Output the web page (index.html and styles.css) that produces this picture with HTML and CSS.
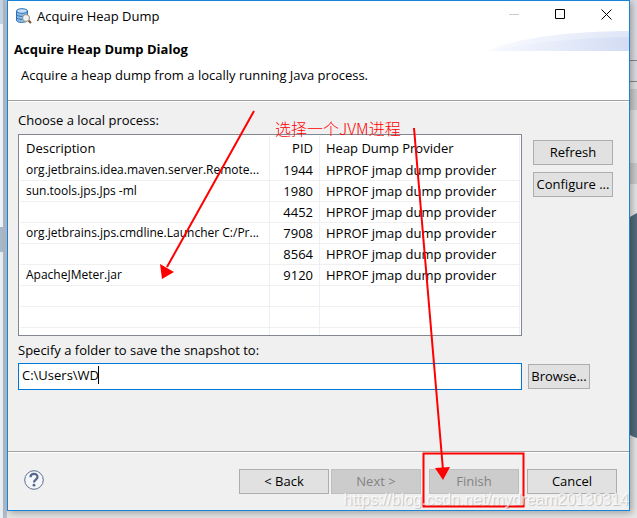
FILE: index.html
```html
<!DOCTYPE html>
<html lang="en">
<head>
    <meta charset="utf-8">
    <title>Acquire Heap Dump</title>
    <link rel="stylesheet" href="styles.css">
</head>
<body>
    <div class="edge edge-left"></div>
    <main class="dialog">
        <header class="titlebar">
            <svg class="app-icon" viewBox="0 0 16 16" width="16" height="16">
                <path d="M.5 3v9c0 1.500 2 2.500 5 2.500s6-1 6-2.500V3z" fill="#8dbbe9" stroke="#2f6fb5"/>
                <ellipse cx="6" cy="3" rx="5.500" ry="2.300" fill="#c4e0f8" stroke="#2f6fb5"/>
                <path d="M.5 6.500c1 2.500 10 2.500 11 0M.5 9.500c1 2.500 10 2.500 11 0" fill="none" stroke="#2f6fb5"/>
                <path d="M12.500 12.500l2.500 2.500" stroke="#705030" stroke-width="2"/>
                <circle cx="10" cy="10" r="3.500" fill="#e9f2f8" stroke="#9b8e72"/>
            </svg>
            <span class="title">Acquire Heap Dump</span>
            <button class="win-btn" aria-label="Minimize" disabled>
                <svg viewBox="0 0 11 11" width="11" height="11"><path d="M0 5.500h10" stroke="#ccc"/></svg>
            </button>
            <button class="win-btn" aria-label="Maximize">
                <svg viewBox="0 0 11 11" width="11" height="11"><path d="M.5 .5h9v9h-9z" fill="none" stroke="#000"/></svg>
            </button>
            <button class="win-btn" aria-label="Close">
                <svg viewBox="0 0 11 11" width="11" height="11"><path d="M.5 .5l10 10M10.500 .5l-10 10" stroke="#000"/></svg>
            </button>
        </header>

        <section class="banner">
            <div class="banner-text">
                <h1>Acquire Heap Dump Dialog</h1>
                <p>Acquire a heap dump from a locally running Java process.</p>
            </div>
            <svg class="swoosh" viewBox="0 0 142 20" width="142" height="20">
                <defs>
                    <linearGradient id="fade">
                        <stop offset="0" stop-color="#fafbff"/>
                        <stop offset="1" stop-color="#dfe6f7"/>
                    </linearGradient>
                    <linearGradient id="fade2">
                        <stop offset="0" stop-color="#f8faff"/>
                        <stop offset="1" stop-color="#d3dcf4"/>
                    </linearGradient>
                </defs>
                <path d="M0 20C30 6 90 0 142 0v20z" fill="url(#fade)"/>
                <path d="M0 20C50 11 100 6 142 6v14z" fill="url(#fade2)"/>
            </svg>
        </section>

        <section class="content">
            <p class="label" id="processLabel">Choose a local process:</p>
            <div class="row">
                <div class="list">
                    <table aria-labelledby="processLabel">
                        <colgroup>
                            <col class="col-desc">
                            <col class="col-pid">
                            <col>
                        </colgroup>
                        <thead>
                            <tr><th>Description</th><th class="pid">PID</th><th>Heap Dump Provider</th></tr>
                        </thead>
                        <tbody>
                            <tr><td class="desc">org.jetbrains.idea.maven.server.Remote...</td><td class="pid">1944</td><td>HPROF jmap dump provider</td></tr>
                            <tr><td class="desc">sun.tools.jps.Jps -ml</td><td class="pid">1980</td><td>HPROF jmap dump provider</td></tr>
                            <tr><td></td><td class="pid">4452</td><td>HPROF jmap dump provider</td></tr>
                            <tr><td class="desc">org.jetbrains.jps.cmdline.Launcher C:/Pr...</td><td class="pid">7908</td><td>HPROF jmap dump provider</td></tr>
                            <tr><td></td><td class="pid">8564</td><td>HPROF jmap dump provider</td></tr>
                            <tr><td class="desc">ApacheJMeter.jar</td><td class="pid">9120</td><td>HPROF jmap dump provider</td></tr>
                            <tr><td></td><td></td><td></td></tr>
                            <tr><td></td><td></td><td></td></tr>
                            <tr><td></td><td></td><td></td></tr>
                        </tbody>
                    </table>
                </div>
                <div class="side">
                    <button class="btn">Refresh</button>
                    <button class="btn">Configure ...</button>
                </div>
            </div>
            <label class="label" for="folder">Specify a folder to save the snapshot to:</label>
            <div class="row row-folder">
                <div class="field">
                    <input type="text" id="folder" value="C:\Users\WD">
                    <span class="caret"></span>
                </div>
                <div class="side">
                    <button class="btn browse">Browse...</button>
                </div>
            </div>
        </section>

        <footer class="footer">
            <button class="help" aria-label="Help">
                <svg viewBox="0 0 20 20" width="20" height="20">
                    <circle cx="10" cy="10" r="9.300" fill="#f4f6f9" stroke="#5d6f91"/>
                    <path d="M6.500 7.300C6.500 2.800 13.500 3 13.500 7c0 2.600-3.500 2.600-3.500 5.500" fill="none" stroke="#52678b" stroke-width="2.200"/>
                    <circle cx="10" cy="15.200" r="1.400" fill="#52678b"/>
                </svg>
            </button>
            <div class="nav">
                <button class="btn">&lt; Back</button>
                <button class="btn" disabled>Next &gt;</button>
            </div>
            <button class="btn" disabled>Finish</button>
            <button class="btn">Cancel</button>
        </footer>
    </main>
    <div class="edge edge-right">
        <svg viewBox="0 0 7 518" width="7" height="518">
            <path d="M0 217q3-2 7-4v225q-4-1-7-3z" fill="#526c7a"/>
        </svg>
    </div>

    <!-- notes drawn over the dialog -->
    <svg class="marks" viewBox="0 0 637 518" width="637" height="518">
        <path d="M254 111L167 267M414 128L443 470" stroke="#f00" stroke-width="2" fill="none"/>
        <path d="M160 264l14 8-12 7zM435 468l15-1-7 13z" fill="#f00"/>
        <path d="M423.500 453.500h100v53h-100z" stroke="#f00" stroke-width="2" fill="none"/>
    </svg>
    <span class="note">选择一个JVM进程</span>
    <span class="watermark">https://blog.csdn.net/mydream20130314</span>
</body>
</html>
```

FILE: styles.css
```css
* { box-sizing: border-box; }
body {
    margin: 0;
    min-height: 100vh;
    display: flex;
    position: relative;
    padding-bottom: 7px;
    background: #e6e6e6;
    font: 13px/18px "Open Sans", "Noto Sans", "Noto Sans CJK SC", sans-serif;
    color: #000;
    overflow: hidden;
}
h1, p { margin: 0; }
button, input { font: inherit; color: inherit; }

.edge { flex: none; width: 7px; margin-bottom: -7px; }
.edge-left {
    background:
        linear-gradient(90deg, transparent 3px, #a9b5c5 3px, #bac3d0 7px),
        linear-gradient(#c3d3e3 0 24px, #eef3f7 24px 227px, #a9b8c8 227px 252px, #e8edf1 252px);
}
.edge-right { background: linear-gradient(#dcdce2 0 60px, #888 60px 61px, #dcdce2 61px 81px, #888 81px 82px, #e1e1e1 82px 89px, #ccc 89px 110px, #e1e1e1 110px 163px, #ccc 163px 184px, #e6e6e6 184px); }
.edge svg { display: block; }

.dialog {
    flex: 1;
    display: flex;
    flex-direction: column;
    position: relative;
    min-width: 0;
    background: #f0f0f0;
    border: 1px solid #1883d7;
    box-shadow: 2px 2px 7px rgba(0, 0, 0, .3);
}
.titlebar { display: flex; align-items: center; height: 29px; padding-left: 8px; background: #fff; }
.title { flex: 1; padding-left: 5px; }
.win-btn { width: 46px; height: 28px; padding: 0; border: 0; background: none; line-height: 1; }

.banner { display: flex; justify-content: space-between; height: 71px; background: #fff; border-bottom: 1px solid #a0a0a0; }
.banner-text { padding: 10px 0 0 6px; }
.banner h1 { font-size: 13px; line-height: 18px; }
.banner p { padding: 8px 0 0 7px; }
.swoosh { flex: none; margin-top: 1px; }

.content { padding: 9px 16px 0 10px; border-top: 1px solid #fff; flex: 1; }
.label { display: block; }
.row { display: flex; gap: 11px; }
.list { flex: 1; min-width: 0; height: 202px; margin: 5px 0; padding: 1px; border: 1px solid #828790; background: #fff; overflow: hidden; }
table { width: 100%; table-layout: fixed; border-collapse: separate; border-spacing: 0; }
.col-desc { width: 250px; }
.col-pid { width: 50px; }
th, td { height: 21px; padding: 0 0 1px 6px; border-right: 1px solid #ebeff7; border-bottom: 1px solid #f0f0f0; text-align: left; font-weight: normal; white-space: nowrap; }
th { height: 24px; border-bottom: 0; }
.desc { font-size: 12px; }
.pid { text-align: right; padding-right: 6px; }

.side { width: 80px; display: flex; flex-direction: column; gap: 7px; padding-top: 11px; }
.btn { height: 25px; padding: 0 0 1px; border: 1px solid #adadad; background: #e1e1e1; line-height: 18px; white-space: nowrap; }
.btn:disabled { background: #ccc; border-color: #bfbfbf; color: #838383; }

.row-folder { gap: 6px; padding-top: 4px; }
.row-folder .side { width: 85px; padding-top: 1px; }
.browse { width: 62px; }
.field { flex: 1; display: flex; height: 27px; padding: 2px 3px; border: 1px solid #0078d7; background: #fff; }
.field input { width: 76px; height: 18px; padding: 0; border: 0; background: none; outline: 0; }
.caret { width: 1px; height: 18px; background: #000; }

.footer { display: flex; gap: 8px; align-items: flex-start; height: 59px; padding: 17px 12px 0 16px; border-top: 1px solid #a0a0a0; box-shadow: inset 0 1px #fff; }
.footer .btn { width: 90px; }
.help { margin: 1px auto 0 0; padding: 0; border: 0; background: none; line-height: 1; }
.nav { display: flex; gap: 2px; }

.marks { position: absolute; left: 0; top: 0; pointer-events: none; }
.note { position: absolute; left: 275px; top: 118px; color: #f00; font: 16px/20px "Noto Sans CJK SC", sans-serif; font-weight: 300; }
.watermark { position: absolute; right: 8px; bottom: 8px; color: rgba(255, 255, 255, .75); font: 16px/20px "Liberation Sans", Arial, sans-serif; text-shadow: 1px 1px 1px rgba(0, 0, 0, .2); }
```
